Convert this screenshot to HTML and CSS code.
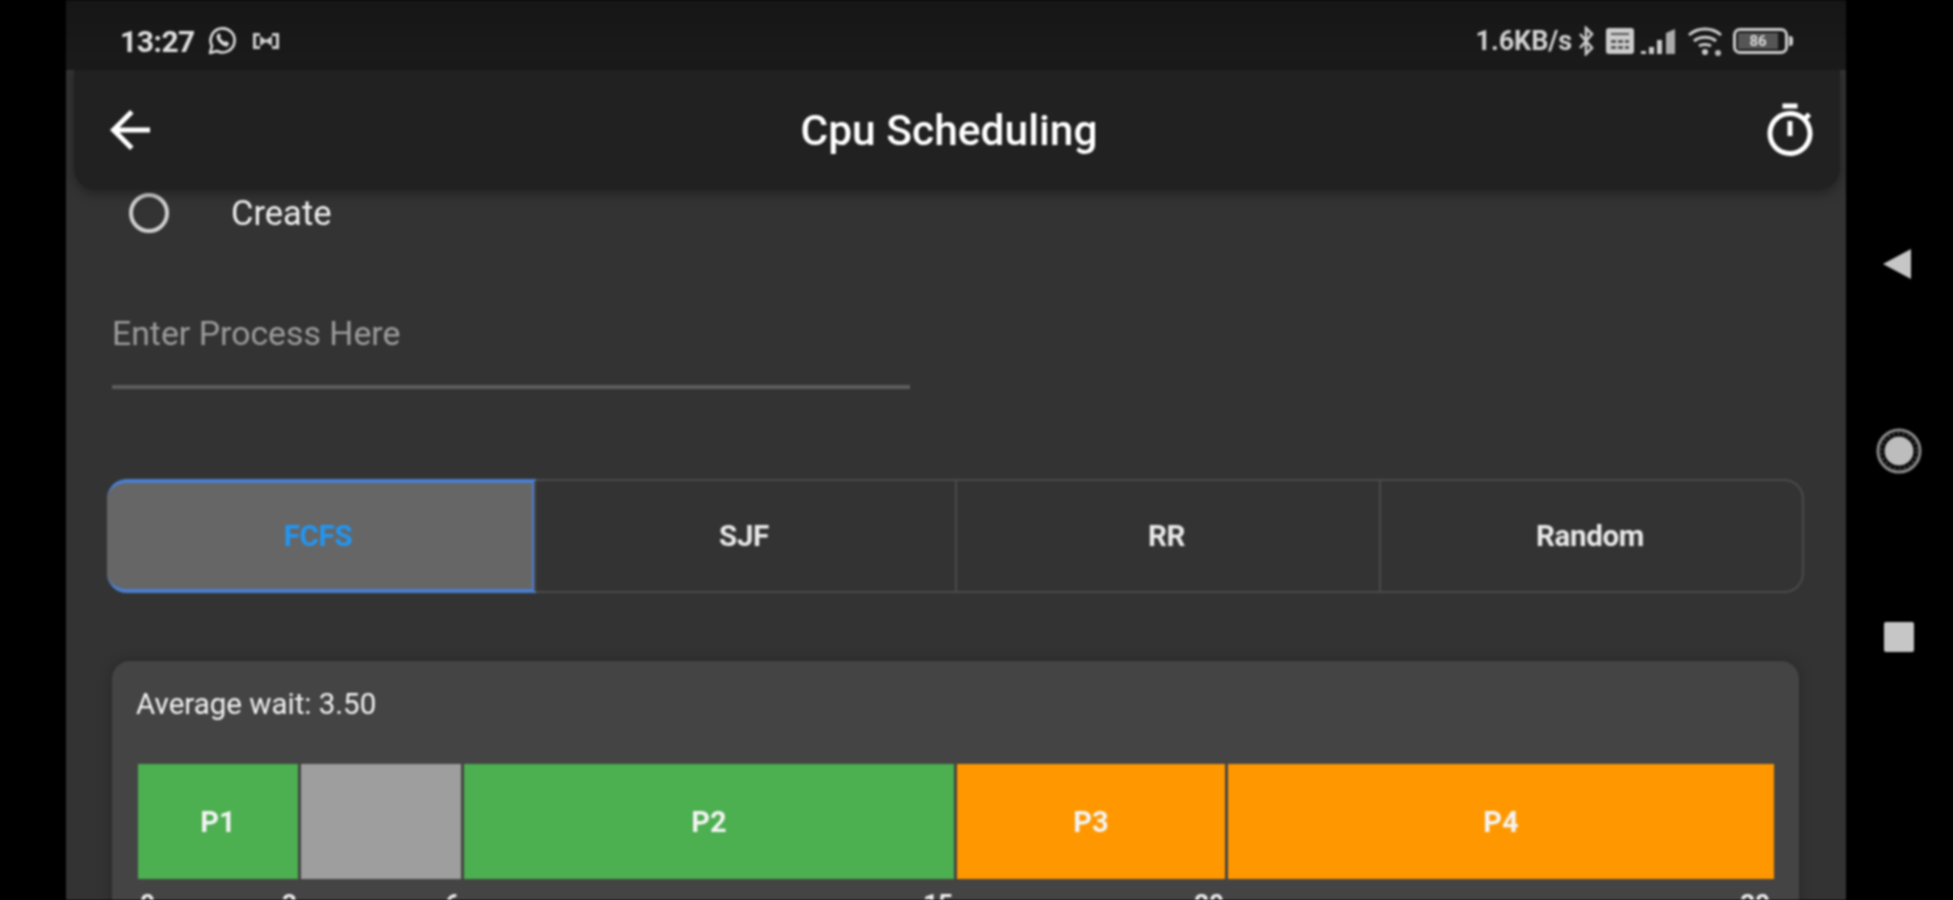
FILE: index.html
```html
<!DOCTYPE html>
<html lang="en">
<head>
<meta charset="utf-8">
<title>Cpu Scheduling</title>
<link rel="stylesheet" href="styles.css">
</head>
<body>
<div class="device">
  <div class="bezel"></div>
  <main class="screen">
    <div class="status">
      <div class="status-left">
        <span class="clock">13:27</span>
        <svg class="ic-wa" viewBox="0 0 30 30"><path d="M3 27l2-7a12 12 0 1 1 5 5z" fill="none" stroke="#ddd" stroke-width="2.6" stroke-linejoin="round"/><path d="M10 9c-1 2 0 5 3 8s6 4 8 3l1-3-3-2-2 1-4-4 1-2-2-3z" fill="#ddd"/></svg>
        <svg class="ic-cast" viewBox="0 0 30 22"><path d="M2 3h7v3H5v10h4v3H2zM28 3h-7v3h4v10h-4v3h7z" fill="#ccc"/><path d="M9 6l6 4 6-4v10l-6-4-6 4z" fill="#ccc"/></svg>
      </div>
      <div class="status-right">
        <span class="speed">1.6KB/s</span>
        <svg class="ic-bt" viewBox="0 0 18 30"><path d="M3 8l12 14-6 6V2l6 6L3 22" fill="none" stroke="#ccc" stroke-width="2.6"/></svg>
        <svg class="ic-sim" viewBox="0 0 30 28"><rect x="1" y="1" width="28" height="26" rx="3" fill="#ccc"/><path d="M6 6h18v2H6zM6 13h5v3H6zM13 13h5v3h-5zM20 13h4v3h-4zM6 19h5v3H6zM13 19h5v3h-5zM20 19h4v3h-4z" fill="#555"/></svg>
        <svg class="ic-signal" viewBox="0 0 36 28"><path d="M1 27v-3h5v3zM9 27v-7h5v7zM17 27V13h5v14z" fill="#ccc"/><path d="M26 27V6l9-4v25z" fill="#aaa"/></svg>
        <svg class="ic-wifi" viewBox="0 0 36 32"><path d="M2 10c9-8 23-8 32 0M7 16c6-5 16-5 22 0M12 21c3-2 9-2 12 0" fill="none" stroke="#ccc" stroke-width="3"/><circle cx="18" cy="27" r="3" fill="#ccc"/><circle cx="31" cy="28" r="3" fill="#bbb"/></svg>
        <span class="battery"><span class="battery-level">86</span></span>
      </div>
    </div>
    <header class="appbar">
      <svg class="ic-back" viewBox="0 0 24 24"><path d="M20 11H7.83l5.59-5.59L12 4l-8 8 8 8 1.41-1.41L7.83 13H20v-2z" fill="#fff"/></svg>
      <h1 class="title">Cpu Scheduling</h1>
      <svg class="ic-timer" viewBox="0 0 24 24"><path d="M15 1H9v2h6V1zm-4 13h2V8h-2v6zm8.03-6.61l1.42-1.42c-.43-.51-.9-.99-1.41-1.41l-1.42 1.42C16.07 4.74 14.12 4 12 4c-4.97 0-9 4.03-9 9s4.02 9 9 9 9-4.03 9-9c0-2.12-.74-4.07-1.97-5.61zM12 20c-3.87 0-7-3.13-7-7s3.13-7 7-7 7 3.13 7 7-3.13 7-7 7z" fill="#fff"/></svg>
    </header>
    <div class="radio-row">
      <span class="radio"></span>
      <span class="radio-label">Create</span>
    </div>
    <div class="field">Enter Process Here</div>
    <div class="segments">
      <div class="seg seg-active">FCFS</div>
      <div class="seg">SJF</div>
      <div class="seg">RR</div>
      <div class="seg">Random</div>
    </div>
    <section class="card">
      <div class="avg">Average wait: 3.50</div>
      <div class="bars">
        <div class="bar green w3">P1</div>
        <div class="bar grey w3"></div>
        <div class="bar green w9">P2</div>
        <div class="bar orange w5">P3</div>
        <div class="bar orange w10">P4</div>
      </div>
      <div class="ticks">
        <span class="tick tick-zero">0</span>
        <span class="tick w3">3</span>
        <span class="tick w3">6</span>
        <span class="tick w9">15</span>
        <span class="tick w5">20</span>
        <span class="tick w10">30</span>
      </div>
    </section>
  </main>
  <aside class="nav">
    <svg class="nav-back" viewBox="0 0 30 32"><path d="M1 16L29 1v30z" fill="#c6c6c6"/></svg>
    <svg class="nav-home" viewBox="0 0 46 46"><circle cx="23" cy="23" r="21" fill="none" stroke="#8c8c8c" stroke-width="3"/><circle cx="23" cy="23" r="17.5" fill="none" stroke="#555" stroke-width="1.5" stroke-dasharray="3 2"/><circle cx="23" cy="23" r="14.5" fill="#bdbdbd"/></svg>
    <span class="nav-recent"></span>
  </aside>
</div>
</body>
</html>
```

FILE: styles.css
```css
* { box-sizing: border-box; }
html, body { margin: 0; height: 900px; overflow: hidden; background: #000; }
body { font-family: Roboto, "Liberation Sans", sans-serif; color: #fff; }

.device { display: flex; width: 1953px; height: 900px; overflow: hidden; filter: blur(1px); }
.bezel { width: 66px; flex: none; background: #000; }
.screen { width: 1780px; height: 900px; flex: none; overflow: hidden; background: #333; }

.status { height: 70px; display: flex; align-items: center; justify-content: space-between; padding: 12px 53px 0 54px; background: linear-gradient(#161616, #1b1b1b); }
.status-left, .status-right { display: flex; align-items: center; }
.clock { font-size: 30px; font-weight: 700; color: #e0e0e0; letter-spacing: -0.5px; }
.ic-wa { width: 30px; height: 30px; margin-left: 12px; }
.ic-cast { width: 30px; height: 24px; margin-left: 14px; }
.speed { font-size: 27px; font-weight: 700; color: #d0d0d0; letter-spacing: -0.1px; }
.ic-bt { width: 18px; height: 30px; margin-left: 5px; }
.ic-sim { width: 30px; height: 28px; margin-left: 10px; }
.ic-signal { width: 36px; height: 28px; margin-left: 5px; }
.ic-wifi { width: 36px; height: 32px; margin-left: 11px; }
.battery { position: relative; width: 55px; height: 26px; margin: 0 5px 0 10px; border: 3px solid #ccc; border-radius: 7px; display: flex; align-items: center; padding: 2px; }
.battery::after { content: ""; position: absolute; right: -8px; top: 5px; width: 4px; height: 10px; background: #ccc; border-radius: 0 3px 3px 0; }
.battery-level { width: 40px; height: 100%; background: #555; color: #ddd; font-size: 15px; font-weight: 700; line-height: 16px; text-align: center; }

.appbar { position: relative; z-index: 2; height: 120px; margin: 0 6px 0 8px; padding: 0 20px 0 26px; display: flex; align-items: center; background: #212121; border-radius: 0 0 22px 22px; box-shadow: 0 4px 12px rgba(0,0,0,0.35); }
.ic-back { width: 60px; height: 60px; flex: none; }
.title { flex: 1; margin: 0; padding: 2px 22px 0 0; text-align: center; font-size: 42.5px; font-weight: 500; line-height: 46px; color: #fff; }
.ic-timer { width: 60px; height: 60px; flex: none; margin-top: 2px; }

.radio-row { height: 46px; display: flex; align-items: center; padding-left: 63px; }
.radio { width: 40px; height: 40px; flex: none; border: 4px solid #cfcfcf; border-radius: 50%; }
.radio-label { margin-left: 62px; font-size: 34.5px; color: #f0f0f0; }

.field { width: 798px; margin: 78px 0 0 46px; padding-bottom: 31px; font-size: 33.8px; line-height: 40px; color: #9c9c9c; border-bottom: 4px solid #5c5c5c; }

.segments { display: grid; grid-template-columns: 425px 421px 424px 1fr; width: 1697px; height: 114px; margin: 90px 0 0 41px; border: 2px solid #4a4a4a; border-radius: 20px; }
.seg { display: flex; align-items: center; justify-content: center; padding-right: 3px; font-size: 29.5px; font-weight: 700; letter-spacing: -0.3px; color: #e8e8e8; border-left: 2px solid #4a4a4a; }
.seg:first-child { border-left: none; }
.seg-active { margin: -2px; border: 4px solid #4a7ecf; border-radius: 20px 0 0 20px; background: #666; color: #2196f3; }

.card { width: 1687px; height: 300px; margin: 68px 0 0 46px; padding: 26px 25px 0 24px; background: #444; border-radius: 18px; box-shadow: 0 0 14px rgba(0,0,0,0.25); }
.avg { font-size: 29.5px; line-height: 34px; color: #f2f2f2; }
.bars { display: flex; height: 115px; margin: 43px 0 0 2px; }
.bar { display: flex; align-items: center; justify-content: center; font-size: 29px; font-weight: 700; color: #f4f4f4; border-right: 3px solid #444; }
.bar:last-child { border-right: none; }
.w3 { width: 163px; }
.w5 { width: 271px; }
.w9 { width: 493px; }
.w10 { width: 546px; }
.green { background: #4caf50; }
.grey { background: #9e9e9e; }
.orange { background: #ff9800; }
.ticks { display: flex; margin: 10px 0 0 2px; font-size: 26px; line-height: 30px; color: #f0f0f0; font-weight: 700; }
.tick { text-align: right; padding-right: 4px; flex: none; }
.tick-zero { width: 0; padding: 0; text-align: left; margin-left: 2px; margin-right: -2px; }

.nav { width: 107px; flex: none; height: 900px; position: relative; background: #000; }
.nav-back { position: absolute; left: 36px; top: 248px; width: 30px; height: 32px; }
.nav-home { position: absolute; left: 30px; top: 428px; width: 46px; height: 46px; }
.nav-recent { position: absolute; left: 38px; top: 622px; width: 30px; height: 30px; background: #c6c6c6; border-radius: 2px; }
```
